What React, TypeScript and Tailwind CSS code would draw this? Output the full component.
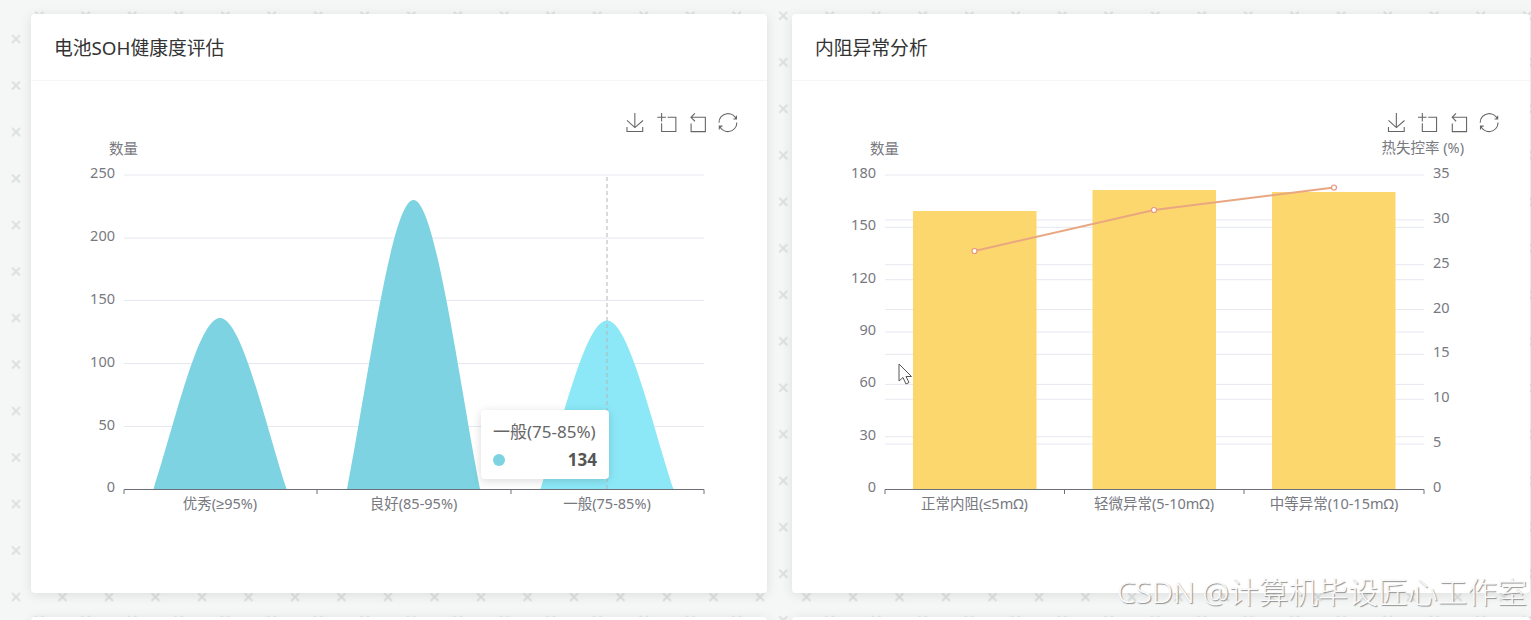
const FONT = '"Noto Sans", "Liberation Sans", "Noto Sans CJK SC", sans-serif';

const AXIS_COLOR = '#6e7079';
const LABEL_COLOR = '#77797f';
const GRID_COLOR = '#e6e8f0';

// echarts toolbox icons, 59 units square
const TOOLBOX = [
  'M4.7,22.9L29.3,45.5L54.7,23.4M4.6,43.6L4.6,58L53.8,58L53.8,43.6M29.2,45.1L29.2,0',
  'M0,13.5h26.9 M13.5,26.9V0 M32.1,13.5H58V58H13.5 V32.1',
  'M22,1.4L9.9,13.5l12.3,12.3 M10.3,13.5H54.9v44.6 H10.3v-25.6',
  'M47,18.9h9.8V8.7 M56.3,20.1 C52.1,9,40.5,0.6,26.8,2.1C12.6,3.7,1.6,16.2,2.1,30.6 M13,41.1H3.1v10.2 M3.7,39.9c4.2,11.1,15.8,19.5,29.5,18 c14.2-1.6,25.2-14.1,24.7-28.5',
];

const SOH_BARS = [
  { label: '优秀(≥95%)', cx: 220, top: 318, fill: '#7dd3e1' },
  { label: '良好(85-95%)', cx: 413.5, top: 200, fill: '#7dd3e1' },
  { label: '一般(75-85%)', cx: 607, top: 320.5, fill: '#8ce8f7' },
];

const RES_BARS = [
  { label: '正常内阻(≤5mΩ)', x: 913, top: 211, cx: 974.5, lineY: 251 },
  { label: '轻微异常(5-10mΩ)', x: 1092.5, top: 190, cx: 1154, lineY: 210 },
  { label: '中等异常(10-15mΩ)', x: 1272, top: 192, cx: 1334, lineY: 187.5 },
];

function peakPath(cx: number, top: number) {
  const w = 66.5;
  const base = 489;
  const h = base - top;
  return `M${cx - w},${base} C${cx - w * 0.68},${base - h * 0.38} ${cx - w * 0.33},${top} ${cx},${top} C${cx + w * 0.33},${top} ${cx + w * 0.68},${base - h * 0.38} ${cx + w},${base} Z`;
}

function Toolbox({ xs }: { xs: number[] }) {
  return (
    <g fill="none" stroke="#666" strokeWidth={3.4}>
      {TOOLBOX.map((d, i) => (
        <path key={i} d={d} transform={`translate(${xs[i]},113) scale(0.32)`} />
      ))}
    </g>
  );
}

function AxisLabel({ x, y, anchor = 'end', children }: { x: number; y: number; anchor?: 'start' | 'middle' | 'end'; children: React.ReactNode }) {
  return (
    <text x={x} y={y} textAnchor={anchor} fontSize={14.5} fill={LABEL_COLOR}>
      {children}
    </text>
  );
}

function SohChart() {
  const ticks = [
    { v: 250, y: 175 },
    { v: 200, y: 238 },
    { v: 150, y: 300.5 },
    { v: 100, y: 363.5 },
    { v: 50, y: 426.5 },
  ];
  return (
    <svg viewBox="31 81 736 512" className="h-[512px] w-[736px]" style={{ fontFamily: FONT }}>
      <Toolbox xs={[625.5, 657.3, 687.8, 718.3]} />
      <AxisLabel x={138} y={154}>数量</AxisLabel>
      {ticks.map((t) => (
        <g key={t.v}>
          <line x1={124} x2={704} y1={t.y} y2={t.y} stroke={GRID_COLOR} />
          <AxisLabel x={115} y={t.y + 3}>{t.v}</AxisLabel>
        </g>
      ))}
      <AxisLabel x={115} y={492}>0</AxisLabel>
      {SOH_BARS.map((b) => (
        <path key={b.label} d={peakPath(b.cx, b.top)} fill={b.fill} />
      ))}
      <line x1={607} x2={607} y1={177} y2={489} stroke="#b5b5b5" strokeDasharray="4 3" />
      <line x1={124} x2={704} y1={489.5} y2={489.5} stroke={AXIS_COLOR} />
      {[124, 317, 511, 704].map((x) => (
        <line key={x} x1={x} x2={x} y1={489.5} y2={494} stroke={AXIS_COLOR} />
      ))}
      {SOH_BARS.map((b) => (
        <AxisLabel key={b.label} x={b.cx} y={509} anchor="middle">{b.label}</AxisLabel>
      ))}
    </svg>
  );
}

function ResistanceChart() {
  const left = [180, 150, 120, 90, 60, 30];
  const right = [35, 30, 25, 20, 15, 10, 5];
  return (
    <svg viewBox="792 81 738 512" className="h-[512px] w-[738px]" style={{ fontFamily: FONT }}>
      <Toolbox xs={[1387, 1418, 1449, 1479.5]} />
      <AxisLabel x={899} y={154}>数量</AxisLabel>
      <AxisLabel x={1464} y={153}>热失控率 (%)</AxisLabel>
      {left.map((v, i) => {
        const y = 175 + i * 52.35;
        return (
          <g key={v}>
            <line x1={885} x2={1424} y1={y} y2={y} stroke={GRID_COLOR} />
            <AxisLabel x={876} y={y + 3}>{v}</AxisLabel>
          </g>
        );
      })}
      {right.map((v, i) => {
        const y = 175 + i * 44.85;
        return (
          <g key={v}>
            {i > 0 && <line x1={885} x2={1424} y1={y} y2={y} stroke={GRID_COLOR} />}
            <AxisLabel x={1433} y={y + 3} anchor="start">{v}</AxisLabel>
          </g>
        );
      })}
      <AxisLabel x={876} y={492}>0</AxisLabel>
      <AxisLabel x={1433} y={492} anchor="start">0</AxisLabel>
      {RES_BARS.map((b) => (
        <rect key={b.label} x={b.x} y={b.top} width={123.5} height={489 - b.top} fill="#fcd76d" />
      ))}
      <polyline
        points={RES_BARS.map((b) => `${b.cx},${b.lineY}`).join(' ')}
        fill="none"
        stroke="#e9a781"
        strokeWidth={2}
      />
      {RES_BARS.map((b) => (
        <circle key={b.label} cx={b.cx} cy={b.lineY} r={2.5} fill="#fff" stroke="#e9957f" strokeWidth={1.2} />
      ))}
      <line x1={885} x2={1424} y1={489.5} y2={489.5} stroke={AXIS_COLOR} />
      {[885, 1064.5, 1244, 1424].map((x) => (
        <line key={x} x1={x} x2={x} y1={489.5} y2={494} stroke={AXIS_COLOR} />
      ))}
      {RES_BARS.map((b) => (
        <AxisLabel key={b.label} x={b.cx} y={509} anchor="middle">{b.label}</AxisLabel>
      ))}
      {/* mouse pointer caught in the screenshot */}
      <path d="M899,364 v17 l4,-3.5 l3,6.5 l3,-1.5 l-3,-6 h5.5 Z" fill="#fff" stroke="#555" strokeWidth={1} />
    </svg>
  );
}

function Card({ title, children }: { title: string; children?: React.ReactNode }) {
  return (
    <div className="relative h-[579px] rounded bg-white shadow-[0_2px_12px_rgba(0,0,0,0.1)]">
      <div className="flex h-[67px] items-center border-b border-[#f6f6f6] pl-[23px] pt-[2px] text-[18.8px] text-[#333]">
        {title}
      </div>
      {children}
    </div>
  );
}

export default function App() {
  return (
    <div className="relative h-[620px] w-[1531px] overflow-hidden bg-[#f5f7f7]" style={{ fontFamily: FONT }}>
      {/* crosses on the page background */}
      <svg className="absolute inset-0 h-full w-full">
        <defs>
          <pattern id="crosses" width={46.5} height={46.5} patternUnits="userSpaceOnUse">
            <path
              d="M12,35 l8,8 M20,35 l-8,8 M35.25,11.75 l8,8 M43.25,11.75 l-8,8"
              stroke="#dcdfdf"
              strokeWidth={2}
            />
          </pattern>
        </defs>
        <rect width="100%" height="100%" fill="url(#crosses)" />
      </svg>

      <div className="relative grid grid-cols-[736px_738px] gap-x-[25px] gap-y-[24px] pl-[31px] pt-[14px]">
        <Card title="电池SOH健康度评估">
          <SohChart />
          <div className="absolute left-[450px] top-[396px] h-[69px] w-[128px] rounded bg-white pl-3 pt-[10px] text-[17px] text-[#666] shadow-[0_2px_10px_rgba(0,0,0,0.15)]">
            <div className="leading-6 whitespace-nowrap">一般(75-85%)</div>
            <div className="mt-1 flex items-center justify-between pr-3 leading-6 text-[#555]">
              <span className="h-3 w-3 rounded-full bg-[#7dd3e1]" />
              <span className="font-bold">134</span>
            </div>
          </div>
        </Card>
        <Card title="内阻异常分析">
          <ResistanceChart />
        </Card>
        <Card title="" />
        <Card title="" />
      </div>

      {/* blog watermark */}
      <div className="absolute left-[1117px] top-[574px] whitespace-nowrap text-[29.8px] leading-9 font-light text-[#fafafa] [text-shadow:1px_1px_1px_#8f8f8f]">
        CSDN @计算机毕设匠心工作室
      </div>
    </div>
  );
}
